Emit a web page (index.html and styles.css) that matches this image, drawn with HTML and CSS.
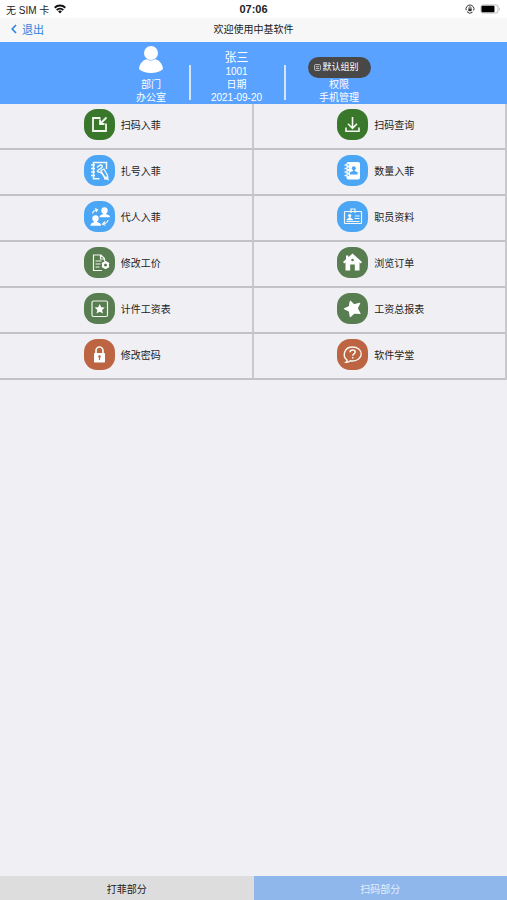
FILE: index.html
```html
<!DOCTYPE html>
<html lang="zh-CN">
<head>
<meta charset="utf-8">
<meta name="viewport" content="width=device-width, initial-scale=1">
<title>欢迎使用中基软件</title>
<link rel="stylesheet" href="styles.css">
</head>
<body>
<div class="status">
  <div class="status-side">
    <span>无 SIM 卡</span>
    <svg width="12" height="10" viewBox="0 0 12 10" fill="none" stroke="#111" stroke-width="1.9"><path d="M.7 3.7a7.6 7.6 0 0 1 10.6 0M2.7 6a4.8 4.8 0 0 1 6.600 0"/><path d="M4 7.300a3 3 0 0 1 4 0L6 9.500z" fill="#111" stroke="none"/></svg>
  </div>
  <strong class="clock">07:06</strong>
  <div class="status-side status-end">
    <svg width="10" height="10" viewBox="0 0 10 10" fill="none" stroke="#333"><path d="M1.200 6.300A4 4 0 1 1 8.700 6.500M2 7.700a4 4 0 0 0 5.500.6"/><path d="M3.300 4.500h3.400v2.700H3.300z" fill="#333" stroke="none"/><path d="M4 4.600V3.700a1 1 0 0 1 2 0v.9" stroke-width=".8"/></svg>
    <svg width="21" height="10" viewBox="0 0 21 10"><rect x="1" y="1" width="17" height="8" rx="2" fill="#fff" stroke="#aaa" stroke-width=".8"/><rect x="1.500" y="1.700" width="13" height="6.600" rx="1" fill="#000"/><path d="M19 3.500q1.500 1.500 0 3z" fill="#999"/></svg>
  </div>
</div>
<header class="nav">
  <a class="back" href="#"><svg width="6" height="10" viewBox="0 0 6 10" fill="none" stroke="#2b83dc" stroke-width="1.600"><path d="M5 1 1.200 5 5 9"/></svg>退出</a>
  <h1 class="title">欢迎使用中基软件</h1>
</header>
<section class="profile">
  <div class="info info-dept">
    <svg class="avatar" width="26" height="29" viewBox="0 0 26 29" fill="#fff"><circle cx="13" cy="8" r="7"/><path d="M1 24C1.500 18 6 14.500 9 14.300q4 2.400 8 0C20 14.500 24.500 18 25 24 20 29.300 6 29.300 1 24z"/></svg>
    <span>部门</span><span>办公室</span>
  </div>
  <div class="info info-user">
    <strong class="name">张三</strong>
    <span>1001</span><span>日期</span><span>2021-09-20</span>
  </div>
  <div class="info info-role">
    <button class="group" type="button"><svg width="7" height="7" viewBox="0 0 7 7" fill="none" stroke="#ddd" stroke-width=".8"><rect x=".6" y=".6" width="5.800" height="5.800" rx="1"/><path d="M2 2.700h3M2 4.500h3"/></svg>默认组别</button>
    <span>权限</span><span>手机管理</span>
  </div>
</section>
<main class="menu">
  <a class="item" href="#"><svg class="icon green" viewBox="0 0 31 31"><path d="M16.500 9H9v13h13v-7.500" stroke-width="1.800"/><path d="m22.500 8.500-6 6M16 10.500V15h4.500" stroke-width="1.800"/></svg>扫码入菲</a>
  <a class="item" href="#"><svg class="icon green" viewBox="0 0 31 31"><path d="M15.500 8v11M11 14.800l4.500 4.500 4.500-4.500M9 18.500v3.800h13v-3.800" stroke-width="1.600"/></svg>扫码查询</a>
  <a class="item" href="#"><svg class="icon blue" viewBox="0 0 31 31"><path d="M22.500 14V7.500h-13v16.300h6M22.500 21.500v2.300H20M7 10h4M7 13.500h4M7 17h4M7 20.500h4" stroke-width="1.500"/><path d="M13 12.500q3.500-3.500 5-2t-3 4q-3 2-.5 2.500 2-.3 4 2l4 5" stroke-width="1.400"/><path d="m17 15.500 3-1.500 3.500 6.500.5 4-3.800-2.500z" stroke-width="1.300"/></svg>扎号入菲</a>
  <a class="item" href="#"><svg class="icon blue" viewBox="0 0 31 31"><rect class="solid" x="9.500" y="7" width="13.500" height="17.500" rx="1.800"/><path d="M7.500 10h3M7.500 13.500h3M7.500 17h3M7.500 20.500h3" stroke-width="1.500"/><path d="M11.200 9v13" class="cut" stroke-dasharray="1.500 2"/><circle class="cutfill" cx="16.800" cy="13.300" r="2"/><path class="cutfill" d="M16 14h1.600v2l3 1.300V19.500h-7.600v-2.200l3-1.300z"/></svg>数量入菲</a>
  <a class="item" href="#"><svg class="icon blue" viewBox="0 0 31 31"><g class="solid"><circle cx="20.500" cy="9.500" r="3.200"/><path d="M19 11h3v2l3 1.200q1 .8 1 2H15.500q0-1.500 1-2L19 13z"/><circle cx="11.500" cy="17.500" r="3.200"/><path d="M10 19h3v2l3 1.200q1 .8 1 2.500H6.500q0-2 1-2.500L10 21z"/></g><path d="M8.500 12.500q.5-3 4-3.500M11 7.500l2.500 1.300L12 11M24 19q-.5 3-4.500 4M21 20.500l-2.500 2.700 3 1"/></svg>代人入菲</a>
  <a class="item" href="#"><svg class="icon blue" viewBox="0 0 31 31"><rect x="7.500" y="10.500" width="17" height="12" rx=".8"/><path d="M14 12V8h4v4M18 15h4.500M17.500 17.500h5M9.500 20.500h13"/><circle class="solid" cx="12.700" cy="14.500" r="1.600"/><path class="solid" d="M12 15h1.500v1.800l2.500 1.700v.8H9.500v-.8l2.500-1.700z"/></svg>职员资料</a>
  <a class="item" href="#"><svg class="icon moss" viewBox="0 0 31 31"><path d="M20.500 14v-2.500L17 8H9.500v15.500H18M16.500 8v4h4M11.500 14h6M11.500 17h5M11.500 20h4"/><path d="M21.500 14v8M18 16l7 4M25 16l-7 4" stroke-width="2"/><circle class="solid" cx="21.500" cy="18" r="3.500"/><circle class="cutfill" cx="21.500" cy="18" r="1.500"/></svg>修改工价</a>
  <a class="item" href="#"><svg class="icon moss" viewBox="0 0 31 31"><path class="solid" d="M15.500 6.500 25 15l-1.200 1.500-1.300-1V23.500h-4.700v-6h-4.600v6H8.500v-8l-1.300 1L6 15l3-2.700V8.500h2.300v1.700z"/><circle class="cutfill" cx="15.500" cy="13" r="1.300"/></svg>浏览订单</a>
  <a class="item" href="#"><svg class="icon moss" viewBox="0 0 31 31"><rect x="8" y="8" width="15.500" height="15.500" rx="1.500"/><path class="solid" d="m15.700 11 1.500 3.200 3.600.4-2.700 2.400.8 3.500-3.200-1.800-3.200 1.800.8-3.500-2.700-2.400 3.600-.4z"/></svg>计件工资表</a>
  <a class="item" href="#"><svg class="icon moss" viewBox="0 0 31 31"><path class="solid round" d="m13.300 8.300 3.700 3.600 5.700-1.600-2.500 5 2.800 5.200-5.500-.6-4.200 3.600-.9-5.300-4.900-2.500 4.900-2.200z"/></svg>工资总报表</a>
  <a class="item" href="#"><svg class="icon rust" viewBox="0 0 31 31"><path d="M12 15v-3.500a3.500 3.500 0 0 1 7 0V15" stroke-width="1.700"/><rect class="solid" x="10" y="14" width="11" height="9.500" rx=".8"/><circle class="cutfill" cx="15.500" cy="17.500" r="1.300"/><path class="cut" d="M15.500 18v3"/></svg>修改密码</a>
  <a class="item" href="#"><svg class="icon rust" viewBox="0 0 31 31"><path d="M10.200 21.200C4.500 17 7.500 8 15.500 8c5 0 8.700 3 8.700 7s-4 7-8.700 7q-1 0-2-.2-2 1.700-4.500 1.500 1.200-.8 1.200-2.100z" stroke-width="1.400"/><path d="M13 13.300c0-3.300 5.200-3 5.200-.3 0 2-2.500 1.700-2.500 3.800M15.700 18v1.500" stroke-width="1.500"/></svg>软件学堂</a>
</main>
<nav class="tabs">
  <button class="tab" type="button">打菲部分</button>
  <button class="tab tab-active" type="button">扫码部分</button>
</nav>
</body>
</html>
```
FILE: styles.css
```css
* {
  box-sizing: border-box;
}

body {
  margin: 0;
  min-height: 100vh;
  display: flex;
  flex-direction: column;
  background: #efeff4;
  color: #222;
  font-family: "Liberation Sans", "Noto Sans CJK SC", sans-serif;
  font-size: 10px;
}

a {
  color: inherit;
  text-decoration: none;
}

button {
  border: 0;
  font: inherit;
  cursor: pointer;
}

svg {
  flex: none;
}

.status {
  display: flex;
  align-items: center;
  height: 18px;
  padding: 0 6px;
  background: #fff;
}

.status-side {
  flex: 1;
  display: flex;
  align-items: center;
  gap: 5px;
}

.status-end {
  justify-content: flex-end;
}

.clock {
  font-size: 11px;
}

.nav {
  display: grid;
  grid-template-columns: 1fr auto 1fr;
  align-items: center;
  height: 24px;
  padding: 0 11px 3px;
  background: #f7f7f7;
}

.back {
  display: flex;
  align-items: center;
  gap: 5px;
  color: #2b83dc;
  font-size: 11px;
}

.title {
  margin: 0;
  font-size: 10px;
  font-weight: 400;
}

.profile {
  display: flex;
  justify-content: center;
  height: 62px;
  background: #5aa2ff;
  color: #fff;
  line-height: 13px;
}

.info {
  position: relative;
  display: flex;
  flex-direction: column;
  justify-content: flex-end;
  align-items: center;
}

.info-dept {
  width: 76px;
}

.info-user {
  width: 95px;
}

.info-role {
  width: 110px;
}

.info + .info::before {
  content: "";
  position: absolute;
  left: 0;
  bottom: 4px;
  width: 2px;
  height: 35px;
  background: #d4e5fc;
}

.avatar {
  margin-bottom: 4px;
}

.name {
  font-size: 12px;
  font-weight: 400;
  line-height: 13px;
}

.group {
  display: flex;
  align-items: center;
  gap: 2px;
  height: 21px;
  width: 63px;
  padding: 0 6px;
  border-radius: 11px;
  background: #484848;
  color: #fff;
  font-size: 9px;
  white-space: nowrap;
}

.menu {
  display: grid;
  grid-template-columns: 1fr 1fr;
}

.item {
  display: flex;
  align-items: center;
  gap: 6px;
  height: 46px;
  padding: 0 0 3px 33%;
  border-right: 2px solid #c9c9cc;
  border-bottom: 2px solid #c3c3c6;
}

.icon {
  width: 31px;
  height: 31px;
  border-radius: 13px;
  background: var(--tone);
  fill: none;
  stroke: #f4f8f0;
  stroke-width: 1.2;
}

.green {
  --tone: #39782b;
}

.blue {
  --tone: #4ba6f6;
}

.moss {
  --tone: #587d50;
}

.rust {
  --tone: #bd6442;
}

.solid {
  fill: #fff;
  stroke: none;
}

.round {
  stroke: #fff;
  stroke-linejoin: round;
}

.cut {
  stroke: var(--tone);
}

.cutfill {
  fill: var(--tone);
  stroke: none;
}

.tabs {
  display: grid;
  grid-template-columns: 1fr 1fr;
  height: 24px;
  margin-top: auto;
}

.tab {
  background: #ddd;
  color: #222;
}

.tab-active {
  background: #90b7eb;
  color: #e3eefc;
}
```
